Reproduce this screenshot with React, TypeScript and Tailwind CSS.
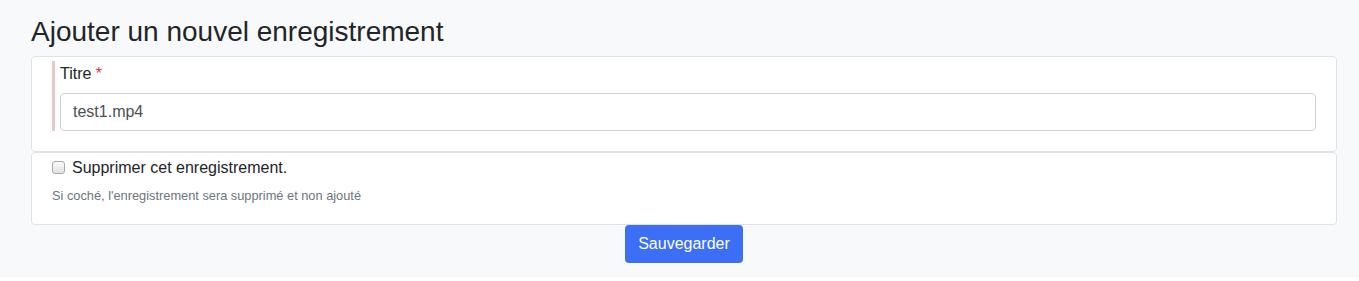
import React from 'react';

const App = () => {
  return (
    <div className="h-[277px] bg-[#f8f9fa] pl-[31px] pr-[22px] pt-[15px] font-['Liberation_Sans',Arial,sans-serif] text-[#212529]">
      <h3 className="text-[28px] leading-[1.2] mb-[7px]">Ajouter un nouvel enregistrement</h3>

      <div className="bg-white border border-[#dfe2e6] rounded-[4px] pl-[20px] pr-[20px] pt-[4px] pb-[20px]">
        <div className="border-l-[3px] border-[#e8c7ca] pl-[5px]">
          <label className="block text-[16px] leading-[24px] pt-[1px] mb-[7px]">
            Titre <span className="text-[#dc3545]">*</span>
          </label>
          <input
            type="text"
            defaultValue="test1.mp4"
            className="block w-full h-[38px] border border-[#ced4da] rounded-[4px] px-[12px] text-[16px] text-[#495057] bg-white outline-none"
          />
        </div>
      </div>

      <div className="bg-white border border-[#dfe2e6] rounded-[4px] px-[20px] pt-[3px] pb-[19px]">
        <div className="flex items-center h-[24px]">
          <input
            type="checkbox"
            className="appearance-none w-[13px] h-[13px] mr-[7px] border border-[#a8a8a8] rounded-[3px] bg-gradient-to-b from-[#fafafa] to-[#e2e2e2]"
          />
          <span className="text-[16px] leading-[24px]">Supprimer cet enregistrement.</span>
        </div>
        <p className="text-[12.8px] leading-[19px] text-[#6c757d] mt-[6px]">
          Si coché, l'enregistrement sera supprimé et non ajouté
        </p>
      </div>

      <div className="flex justify-center">
        <button className="h-[38px] w-[118px] bg-[#3d6ff6] text-white text-[16px] rounded-[4px]">
          Sauvegarder
        </button>
      </div>
    </div>
  );
};

export default App;
